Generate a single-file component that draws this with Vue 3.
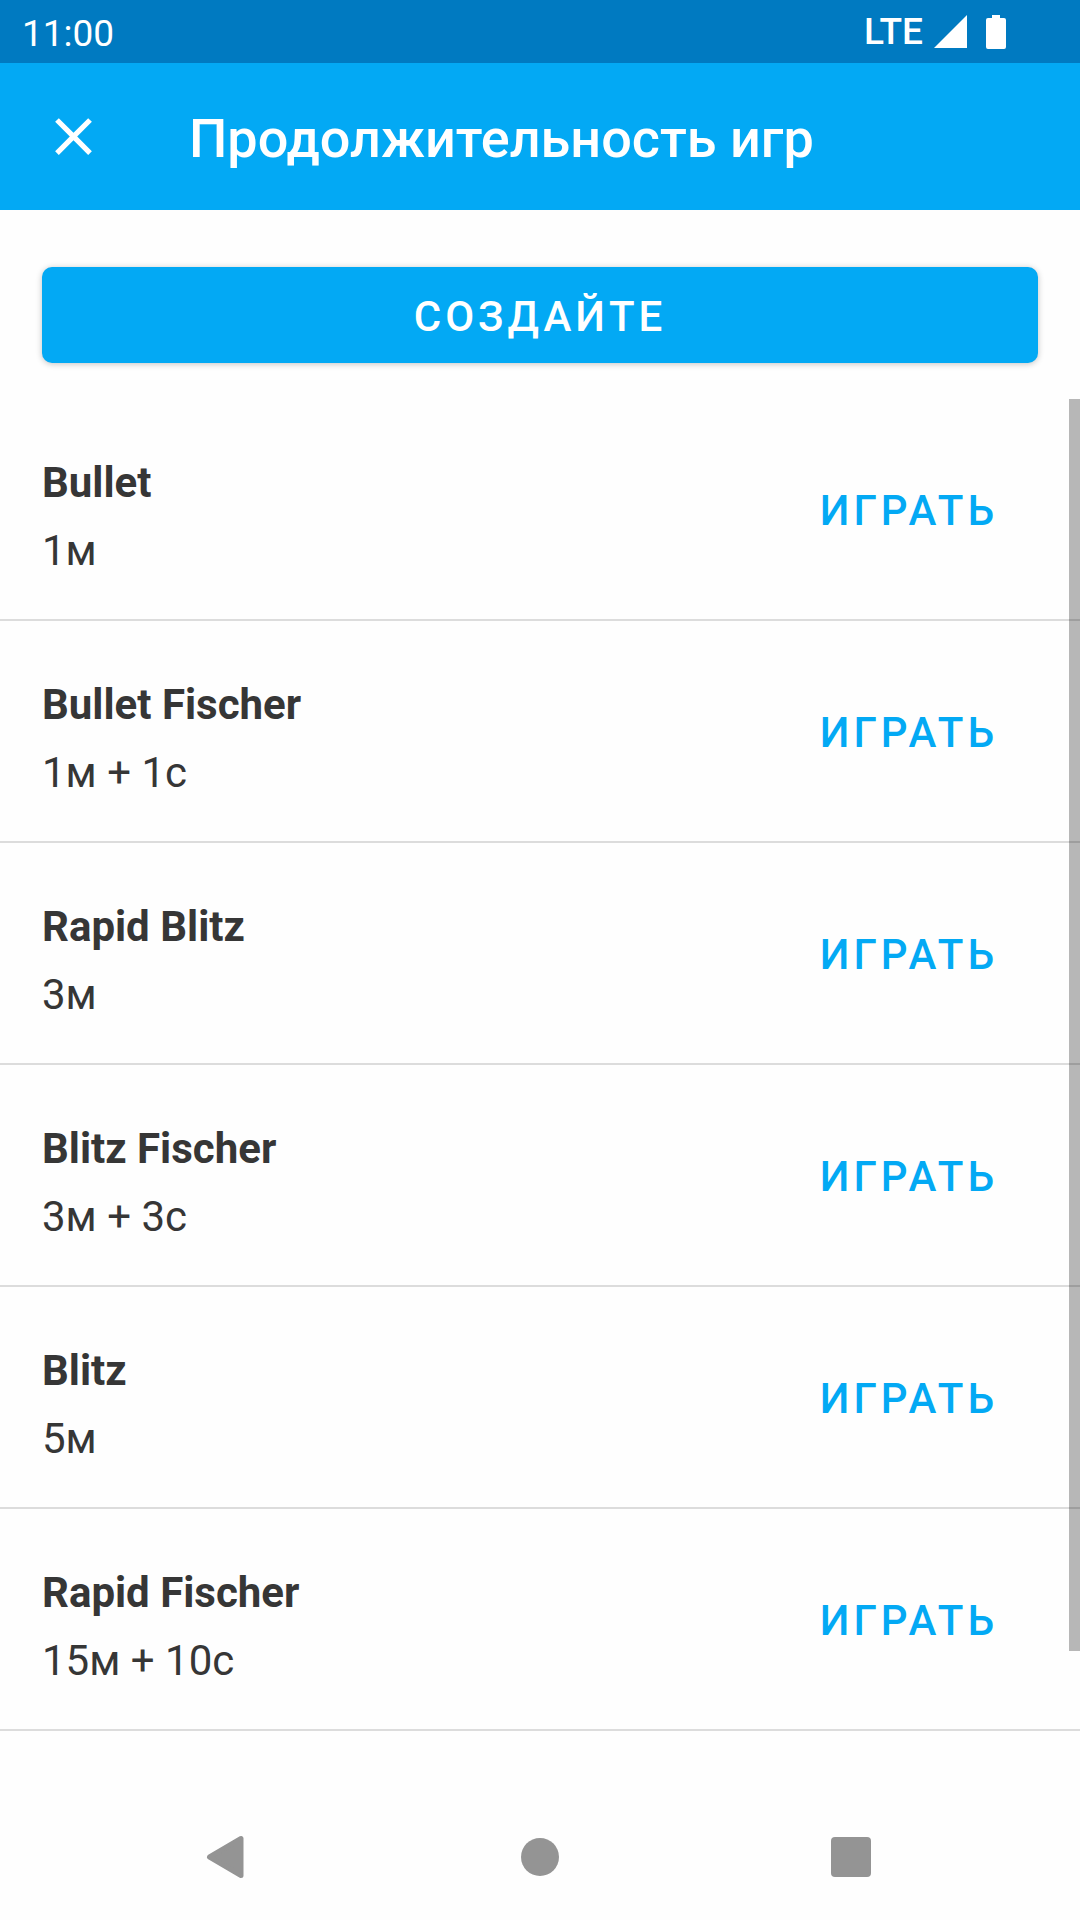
<template>
  <div class="page">

    <!-- Status bar -->
    <div class="status">
      <span class="clock">11:00</span>
      <div class="indicators">
        <span class="network">LTE</span>
        <svg class="signal" viewBox="0 0 33 33" aria-hidden="true">
          <path d="M33 0V33H0Z" />
        </svg>
        <svg class="battery" viewBox="0 0 20 34" aria-hidden="true">
          <path d="M6 0H14V3H18Q20 3 20 5V32Q20 34 18 34H2Q0 34 0 32V5Q0 3 2 3H6Z" />
        </svg>
      </div>
    </div>

    <!-- Toolbar -->
    <header class="toolbar">
      <button class="closeBtn" type="button" aria-label="Закрыть">
        <svg viewBox="0 0 24 24" aria-hidden="true">
          <path d="M19 6.41 17.59 5 12 10.59 6.41 5 5 6.41 10.59 12 5 17.59 6.41 19 12 13.41 17.59 19 19 17.59 13.41 12z" />
        </svg>
      </button>
      <h1 class="title">Продолжительность игр</h1>
    </header>

    <!-- Time controls -->
    <main class="main">
      <div class="createWrap">
        <button class="createBtn" type="button">СОЗДАЙТЕ</button>
      </div>

      <div class="listWrap">
        <ul class="list">
          <li v-for="control in controls" :key="control.name" class="row">
            <div class="info">
              <p class="name">{{ control.name }}</p>
              <p class="duration">{{ control.duration }}</p>
            </div>
            <button class="playBtn" type="button">ИГРАТЬ</button>
          </li>
        </ul>
        <div class="scrollThumb" />
      </div>
    </main>

    <!-- System navigation -->
    <nav class="navBar">
      <button class="navBtn" type="button" aria-label="Назад">
        <svg viewBox="0 0 64 64" aria-hidden="true">
          <path d="M44 13.5V50.5L12.5 32Z" stroke="currentColor" stroke-width="5" stroke-linejoin="round" />
        </svg>
      </button>
      <button class="navBtn" type="button" aria-label="Домой">
        <svg viewBox="0 0 64 64" aria-hidden="true">
          <circle cx="32" cy="32" r="19" />
        </svg>
      </button>
      <button class="navBtn" type="button" aria-label="Обзор">
        <svg viewBox="0 0 64 64" aria-hidden="true">
          <rect x="12" y="12" width="40" height="40" rx="4" />
        </svg>
      </button>
    </nav>

  </div>
</template>

<script setup>
import { ref } from 'vue'

const controls = ref([
  { name: 'Bullet', duration: '1м' },
  { name: 'Bullet Fischer', duration: '1м + 1с' },
  { name: 'Rapid Blitz', duration: '3м' },
  { name: 'Blitz Fischer', duration: '3м + 3с' },
  { name: 'Blitz', duration: '5м' },
  { name: 'Rapid Fischer', duration: '15м + 10с' },
])
</script>

<style>
body {
  margin: 0;
  background: #fefefe;
}
</style>

<style scoped>
.page {
  --primary: #03a9f4;
  --primary-dark: #007ac1;
  --surface: #fefefe;
  --text: #363636;
  --divider: #dcdcdc;
  --nav: #949494;

  display: flex;
  flex-direction: column;
  min-height: 100vh;
  background: var(--surface);
  color: var(--text);
  font-family: Roboto, 'Noto Sans', sans-serif;
  font-size: 42px;
}

button {
  padding: 0;
  border: none;
  background: none;
  font-family: inherit;
  font-size: inherit;
  cursor: pointer;
}

svg {
  display: block;
  fill: currentColor;
}

/* ─── Status bar ─────────────────────────── */
.status {
  display: flex;
  align-items: center;
  justify-content: space-between;
  height: 63px;
  padding: 0 74px 0 22px;
  box-sizing: border-box;
  background: var(--primary-dark);
  color: #fff;
  font-size: 37px;
}
.clock { padding-top: 4px; }
.indicators {
  display: flex;
  align-items: center;
}
.network { font-weight: 500; }
.signal {
  width: 33px;
  height: 33px;
  margin-left: 11px;
}
.battery {
  width: 20px;
  height: 34px;
  margin-left: 19px;
}

/* ─── Toolbar ────────────────────────────── */
.toolbar {
  display: flex;
  align-items: center;
  gap: 84px;
  height: 147px;
  padding: 0 42px;
  background: var(--primary);
  color: #fff;
}
.closeBtn { color: inherit; }
.closeBtn svg {
  width: 63px;
  height: 63px;
}
.title {
  margin: 0;
  padding-top: 4px;
  font-size: 54px;
  font-weight: 500;
}

/* ─── Main ───────────────────────────────── */
.main {
  flex: 1;
  display: flex;
  flex-direction: column;
}
.createWrap { padding: 57px 42px 36px; }
.createBtn {
  display: block;
  width: 100%;
  height: 96px;
  padding-top: 2px;
  border-radius: 10px;
  background: var(--primary);
  box-shadow: 0 1px 6px rgba(0, 0, 0, 0.24);
  color: #fff;
  font-weight: 500;
  letter-spacing: 4px;
}

/* ─── List ───────────────────────────────── */
.listWrap {
  position: relative;
  flex: 1;
}
.list {
  margin: 0;
  padding: 0;
  list-style: none;
}
.row {
  display: flex;
  align-items: center;
  justify-content: space-between;
  padding: 0 82px 0 42px;
  border-bottom: 2px solid var(--divider);
}
.info { padding: 50px 0 34px; }
.name,
.duration {
  margin: 0;
  line-height: 68px;
}
.name { font-weight: 700; }
.playBtn {
  padding-top: 2px;
  color: var(--primary);
  font-weight: 500;
  letter-spacing: 4px;
}
.scrollThumb {
  position: absolute;
  top: 0;
  right: 0;
  width: 11px;
  height: 89.75%;
  background: rgba(0, 0, 0, 0.28);
}

/* ─── Navigation bar ─────────────────────── */
.navBar {
  display: grid;
  grid-template-columns: repeat(3, 1fr);
  justify-items: center;
  align-items: center;
  height: 126px;
  padding: 0 74px;
}
.navBtn { color: var(--nav); }
.navBtn svg {
  width: 64px;
  height: 64px;
}
</style>
